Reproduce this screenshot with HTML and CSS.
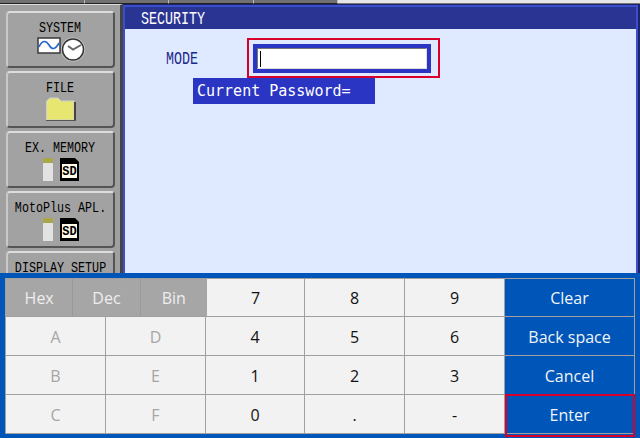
FILE: index.html
```html
<!DOCTYPE html>
<html>
	<head>
		<meta http-equiv="Content-Type" content="text/html; charset=utf-8" />
		<title>SECURITY</title>
		<link rel="stylesheet" href="styles.css">
	</head>
	<body>
		<div class="tp-strip">
			<span class="tp-tab"></span>
			<span class="tp-tab"></span>
			<span class="tp-tab"></span>
			<span class="tp-tab"></span>
			<span class="tp-rest"></span>
		</div>
		<div class="tp-screen">
			<div class="tp-side">
				<div class="tp-menu">
					<div class="tp-menu-name"><span>SYSTEM</span></div>
					<div class="tp-menu-icon">
						<svg width="48" height="25" viewBox="0 0 48 25">
							<rect x="1" y="1" width="22" height="15" fill="#fff" stroke="#3a3a3a" stroke-width="1.5"/>
							<path d="M2 10 C5 3 9 3 12 8 S18 13 22 6" fill="none" stroke="#2266cc" stroke-width="1.6"/>
							<circle cx="36" cy="12.5" r="12" fill="#ccc"/>
							<circle cx="36" cy="12.5" r="10.5" fill="#fff" stroke="#333" stroke-width="1.5"/>
							<path d="M31 9 L36 12.5 L44 8" fill="none" stroke="#666" stroke-width="2"/>
						</svg>
					</div>
				</div>
				<div class="tp-menu">
					<div class="tp-menu-name"><span>FILE</span></div>
					<div class="tp-menu-icon">
						<svg width="30" height="24" viewBox="0 0 30 24">
							<path d="M0.5 23 V4 L4 1 H12 L15 4 H28 V23 Z" fill="#e6e670" stroke="#d0d0d0" stroke-width="1"/>
							<path d="M29 5 V23" stroke="#222" stroke-width="1.5"/>
							<path d="M0 23.5 H30" stroke="#555" stroke-width="1"/>
						</svg>
					</div>
				</div>
				<div class="tp-menu">
					<div class="tp-menu-name"><span>EX. MEMORY</span></div>
					<div class="tp-menu-icon">
						<svg width="36" height="25" viewBox="0 0 36 25">
							<rect x="0" y="1" width="10" height="23" fill="#e2e2e2"/>
							<rect x="0" y="1" width="10" height="5" fill="#a8a848"/>
							<path d="M17 1 H32 L36 5 V24 H17 Z" fill="#000"/>
							<rect x="19" y="7" width="15" height="14" fill="#fffbe8"/>
							<text x="26.5" y="18" class="tp-sd">SD</text>
						</svg>
					</div>
				</div>
				<div class="tp-menu">
					<div class="tp-menu-name"><span>MotoPlus APL.</span></div>
					<div class="tp-menu-icon">
						<svg width="36" height="25" viewBox="0 0 36 25">
							<rect x="0" y="1" width="10" height="23" fill="#e2e2e2"/>
							<rect x="0" y="1" width="10" height="5" fill="#a8a848"/>
							<path d="M17 1 H32 L36 5 V24 H17 Z" fill="#000"/>
							<rect x="19" y="7" width="15" height="14" fill="#fffbe8"/>
							<text x="26.5" y="18" class="tp-sd">SD</text>
						</svg>
					</div>
				</div>
				<div class="tp-menu">
					<div class="tp-menu-name"><span>DISPLAY SETUP</span></div>
				</div>
			</div>
			<div class="tp-main">
				<div class="tp-title"><span>SECURITY</span></div>
				<div class="tp-body">
					<div class="tp-mode-row">
						<div class="tp-mode"><span>MODE</span></div>
						<div class="tp-focus">
							<div class="tp-field-back">
								<div class="tp-field"><span class="tp-caret"></span></div>
							</div>
						</div>
					</div>
					<div class="tp-prompt">Current Password=</div>
				</div>
			</div>
		</div>
		<div class="kb-panel">
			<div class="kb-grid">
				<div class="kb-row kb-row-top">
					<div class="kb-radix">
						<div class="kb-radix-btn">Hex</div>
						<div class="kb-radix-btn">Dec</div>
						<div class="kb-radix-btn">Bin</div>
					</div>
					<div class="kb-key kb-num">7</div>
					<div class="kb-key kb-num">8</div>
					<div class="kb-key kb-num">9</div>
					<div class="kb-key kb-act">Clear</div>
				</div>
				<div class="kb-row">
					<div class="kb-key kb-off">A</div>
					<div class="kb-key kb-off">D</div>
					<div class="kb-key kb-num">4</div>
					<div class="kb-key kb-num">5</div>
					<div class="kb-key kb-num">6</div>
					<div class="kb-key kb-act">Back space</div>
				</div>
				<div class="kb-row">
					<div class="kb-key kb-off">B</div>
					<div class="kb-key kb-off">E</div>
					<div class="kb-key kb-num">1</div>
					<div class="kb-key kb-num">2</div>
					<div class="kb-key kb-num">3</div>
					<div class="kb-key kb-act">Cancel</div>
				</div>
				<div class="kb-row">
					<div class="kb-key kb-off">C</div>
					<div class="kb-key kb-off">F</div>
					<div class="kb-key kb-num">0</div>
					<div class="kb-key kb-num">.</div>
					<div class="kb-key kb-num">-</div>
					<div class="kb-key kb-act kb-enter">Enter</div>
				</div>
			</div>
		</div>
	</body>
</html>
```
FILE: styles.css
```css
html,body{
	margin: 0;
	padding: 0;
}
body{
	width: 640px;
	height: 438px;
	overflow: hidden;
	background-color: #a0a0a0;
}
.tp-strip{
	display: flex;
	height: 4px;
}
.tp-tab{
	width: 84.5px;
	box-sizing: border-box;
	background-color: #707070;
	border-right: 1px solid #bbb;
	border-bottom: 1px solid #222;
}
.tp-rest{
	flex: 1;
	background-color: #e6e6e6;
	border-bottom: 1px solid #777;
}
.tp-screen{
	display: flex;
	height: 269px;
	overflow: hidden;
	background-color: #1d2366;
	padding-right: 2px;
	box-sizing: border-box;
}
.tp-side{
	width: 123px;
	padding: 6px 0 0 6px;
	box-sizing: border-box;
	border-top: 1px solid #ddd;
	border-right: 3px solid #444;
	background-color: #a0a0a0;
	flex-shrink: 0;
}
.tp-menu{
	width: 109px;
	height: 57px;
	margin-bottom: 3px;
	box-sizing: border-box;
	background-color: #a2a2a2;
	border: 2px solid #555;
	border-top-color: #ddd;
	border-left-color: #c8c8c8;
	border-radius: 4px;
	text-align: center;
	font-family: "Liberation Mono", monospace;
	font-size: 15px;
	color: #000;
}
.tp-menu-name{
	display: flex;
	justify-content: center;
	padding-top: 10px;
	line-height: 12px;
	white-space: nowrap;
}
.tp-menu-name span{
	flex-shrink: 0;
	transform: scaleX(.78);
}
.tp-menu-icon{
	display: flex;
	justify-content: center;
	margin-top: 2px;
}
.tp-sd{
	font-family: "Liberation Mono", monospace;
	font-size: 12px;
	font-weight: bold;
	text-anchor: middle;
	fill: #000;
}
.tp-main{
	flex: 1;
	margin-top: 1px;
	border: 2px solid #3a4fd0;
	border-bottom: 0;
	background-color: #dfe9ff;
}
.tp-title{
	height: 22px;
	line-height: 24px;
	padding-left: 16px;
	background-color: #2a3593;
	color: #fff;
	font-family: "Liberation Mono", monospace;
	font-size: 18px;
	overflow: hidden;
}
.tp-title span,
.tp-mode span{
	display: inline-block;
	transform: scaleX(.74);
	transform-origin: left center;
}
.tp-mode-row{
	display: flex;
	align-items: center;
	padding-top: 9px;
}
.tp-mode{
	width: 122px;
	padding: 2px 0 0 41px;
	box-sizing: border-box;
	color: #1a2a8a;
	font-family: "Liberation Mono", monospace;
	font-size: 18px;
}
.tp-focus{
	width: 193px;
	height: 40px;
	box-sizing: border-box;
	padding: 4px 7px 3px 4px;
	border: 2px solid #d8002a;
}
.tp-field-back{
	height: 29px;
	padding: 4px;
	box-sizing: border-box;
	background-color: #2b35c4;
}
.tp-field{
	height: 21px;
	display: flex;
	align-items: center;
	padding-left: 2px;
	background-color: #fff;
	border: 1px solid #ddd;
	border-top-color: #777;
	border-left-color: #777;
	box-sizing: border-box;
}
.tp-caret{
	width: 1px;
	height: 16px;
	background-color: #000;
}
.tp-prompt{
	width: 182px;
	height: 26px;
	margin-left: 68px;
	padding-left: 4px;
	box-sizing: border-box;
	line-height: 26px;
	background-color: #2b35c4;
	color: #fff;
	font-family: "DejaVu Sans Mono", monospace;
	font-size: 15px;
	white-space: pre;
}
.kb-panel{
	height: 165px;
	padding: 5px 5px 0;
	box-sizing: border-box;
	background-color: #0056b8;
}
.kb-grid{
	width: 630px;
	box-sizing: border-box;
	border-top: 1px solid #a0a0a0;
	border-left: 1px solid #a0a0a0;
	font-family: "Open Sans", "Noto Sans", sans-serif;
	font-size: 16px;
}
.kb-row{
	display: grid;
	grid-template-columns: 100px 100px 99px 100px 100px 130px;
	height: 39px;
}
.kb-row-top{
	grid-template-columns: 201px 98px 100px 100px 130px;
	height: 38px;
}
.kb-key{
	display: flex;
	align-items: center;
	justify-content: center;
	box-sizing: border-box;
	padding-top: 1px;
	border-right: 1px solid #a0a0a0;
	border-bottom: 1px solid #a0a0a0;
	background-color: #f2f2f2;
}
.kb-row-top .kb-key{
	padding-top: 0;
}
.kb-num{
	color: #111;
}
.kb-off{
	color: #a6a6a6;
}
.kb-act{
	background-color: #0056b8;
	color: #f0f4fa;
}
.kb-enter{
	position: relative;
}
.kb-enter:after{
	content: '';
	position: absolute;
	top: -1px;
	left: 0;
	right: -1px;
	bottom: -4px;
	border: 2px solid #d8002a;
}
.kb-radix{
	display: flex;
	gap: 1px;
	box-sizing: border-box;
	border-bottom: 1px solid #a0a0a0;
	background-color: #999;
}
.kb-radix-btn{
	flex: 1;
	display: flex;
	align-items: center;
	justify-content: center;
	background-color: #a6a6a6;
	color: #eee;
}
```
